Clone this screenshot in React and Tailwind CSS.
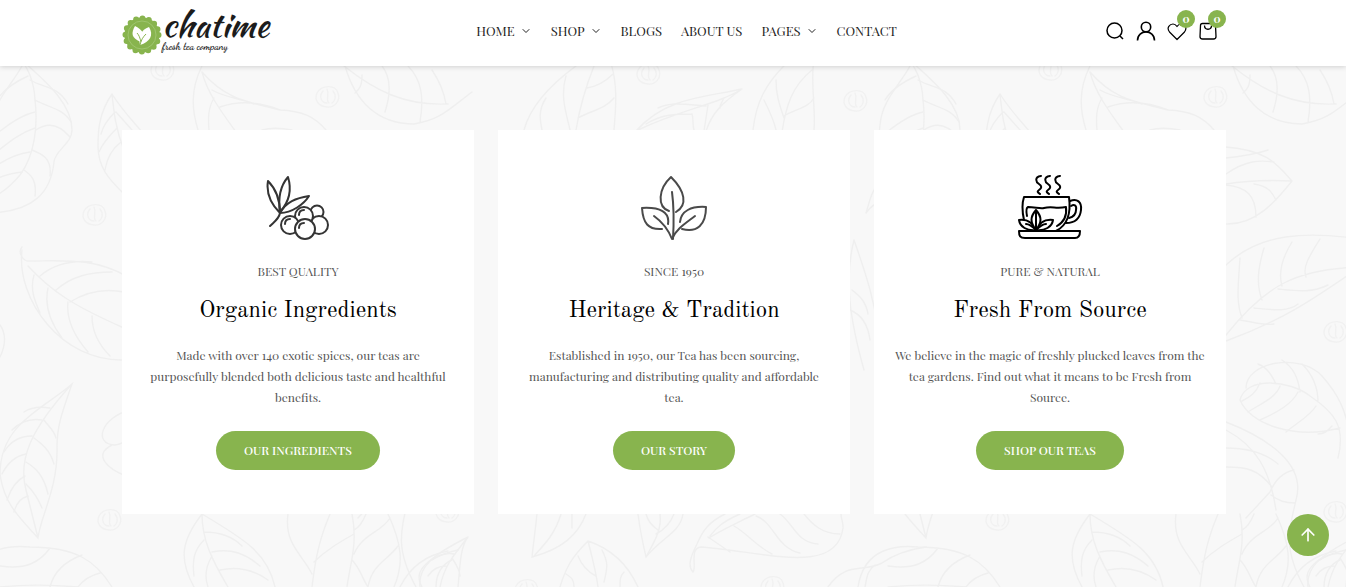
import { ChevronDown, ArrowUp } from "lucide-react";

const menu = [
  { label: "HOME", sub: true },
  { label: "SHOP", sub: true },
  { label: "BLOGS" },
  { label: "ABOUT US" },
  { label: "PAGES", sub: true },
  { label: "CONTACT" },
];

const features = [
  {
    icon: BerriesIcon,
    tag: "BEST QUALITY",
    title: "Organic Ingredients",
    text: "Made with over 140 exotic spices, our teas are purposefully blended both delicious taste and healthful benefits.",
    button: "OUR INGREDIENTS",
  },
  {
    icon: LeavesIcon,
    tag: "SINCE 1950",
    title: "Heritage & Tradition",
    text: "Established in 1950, our Tea has been sourcing, manufacturing and distributing quality and affordable tea.",
    button: "OUR STORY",
  },
  {
    icon: CupIcon,
    tag: "PURE & NATURAL",
    title: "Fresh From Source",
    text: "We believe in the magic of freshly plucked leaves from the tea gardens. Find out what it means to be Fresh from Source.",
    button: "SHOP OUR TEAS",
  },
];

function BerriesIcon() {
  return (
    <svg viewBox="0 0 64 66" className="h-[66px] w-16" fill="none" stroke="#343434" strokeWidth="2" strokeLinecap="round" strokeLinejoin="round">
      <path d="M14 38C5 29 0 18 2 6c7 7 12 16 12 32z" />
      <path d="M14 37C12 23 15 10 22 2c4 13 1 25-8 35z" />
      <path d="M14 38C20 27 30 23 43 21c-5 8-17 17-29 17zM14 38c-1 6-6 9-10 13" />
      <circle cx="51" cy="37" r="6.5" fill="#fff" />
      <circle cx="53" cy="50" r="9" fill="#fff" />
      <circle cx="38" cy="41" r="9" fill="#fff" />
      <circle cx="24" cy="50" r="9" fill="#fff" />
      <circle cx="39" cy="54" r="10" fill="#fff" />
      <path d="M33 40c0-3 2-5 5-5M19 49c0-3 2-5 5-5M33 53c0-3 2-5 5-5" />
    </svg>
  );
}

function LeavesIcon() {
  return (
    <svg viewBox="0 0 66 66" className="size-[66px]" fill="none" stroke="#4a4a4a" strokeWidth="2" strokeLinecap="round" strokeLinejoin="round">
      <path d="M28 36C16 32 17 14 30 2c14 14 17 28 5 35" />
      <path d="M31 17c2 15 2 30 1 47" />
      <path d="M21 54C7 55 2 48 1 33c18-1 28 4 26 16" />
      <path d="M13 41c7 5 14 13 18 23 4-10 14-16 23-23" />
      <path d="M39 47c1-11 11-16 26-15 0 18-9 26-24 22" />
    </svg>
  );
}

function CupIcon() {
  return (
    <svg viewBox="0 0 66 66" className="size-[66px]" fill="none" stroke="#000" strokeWidth="2" strokeLinecap="round" strokeLinejoin="round">
      <path d="M24 1c-7 1-5 6-2 8s3 4 0 6 0 3 1 4M33 1c-7 1-5 6-2 8s3 4 0 6 0 3 1 4M43 1c-7 1-5 6-2 8s3 4 0 6 0 3 1 4" />
      <path d="M7 45C5 36 5 28 7 22h45c2 15-1 28-13 34" />
      <path d="M53 26c7-3 12 1 11 9-1 9-7 13-15 13M54 31c3-2 6-1 5 4 0 4-3 7-7 8" />
      <path d="M10 41c-1-5-1-8 1-9 7 0 12 2 16 1 8-2 12 1 22-1 1 8-2 15-9 19" />
      <path d="M2 56h61c0 5-2 7-5 7H8c-5 0-6-2-6-7z" />
      <path d="M19 55C10 56 3 52 2 45c8-1 14 3 17 10z" fill="#fff" />
      <path d="M19 55c9 1 16-3 17-10-8-1-14 3-17 10z" fill="#fff" />
      <path d="M19 55c-6-8-6-13 0-20 6 7 6 12 0 20z" fill="#fff" />
      <path d="M19 37v18M19 55C15 51 12 49 9 49M19 55c4-4 7-6 10-6" />
    </svg>
  );
}

function Logo() {
  return (
    <a href="#" className="flex items-center text-[#1c1c1c]">
      <svg viewBox="0 0 40 40" className="mt-2 size-10" aria-hidden="true">
        <circle cx="20" cy="20" r="17.5" fill="#88b44e" />
        <circle cx="20" cy="20" r="16.5" fill="none" stroke="#88b44e" strokeWidth="6" strokeLinecap="round" strokeDasharray="0 6.48" />
        <circle cx="20" cy="20" r="14" fill="none" stroke="#a5c977" strokeWidth=".8" />
        <path d="M19 27C9 23 9 18 13 11c8 4 11 9 6 16z" fill="#fff" />
        <path d="M18 30c-2-9 1-15 9-18 5 8 1 15-9 18z" fill="#fff" />
        <path d="M18 30c1-5 3-8 6-11M19 27c-1-4-2-7-4-9" stroke="#88b44e" fill="none" />
      </svg>
      <span className="flex flex-col">
        <span className="font-['Kaushan_Script','Playfair_Display',cursive] text-[34px] leading-8">chatime</span>
        <span className="font-['Dancing_Script','Playfair_Display',cursive] text-[10px] leading-3 font-bold">
          fresh tea company
        </span>
      </span>
    </a>
  );
}

function Bean({ x, y }) {
  return (
    <g transform={`translate(${x} ${y})`} stroke="#f1f1f1">
      <path d="M-11-4C-6-13 8-12 10-4c3 8-4 15-11 14-9-1-13-7-10-14z" />
      <path d="M-5-6c-5 6-1 12 4 12M-1-8c3 5-2 10 2 14M5-6c4 5 2 10-1 12" />
    </g>
  );
}

// One 888px wide strip of the leaf wallpaper
function LeafStrip() {
  return (
    <>
      <path d="M22 60c6 10 12 20 13 40 3 25 0 55-15 75-10 12-20 20-32 24M22 60c15 15 50 40 50 70 0 14-17 20-18 32-3 30-20 50-66 51M22 66C12 85-6 100-8 125c-1 12-3 20-3 30" />
      <path d="M30 80c14 8 28 6 38 24M35 100c14 8 28 8 36 22M36 130c10-7 22-7 34 7M32 150c10 4 20 8 18 26M24 170c7 5 13 10 11 26M28 76C15 82 3 90-3 100M35 112c-14 3-26 12-36 20M35 128c-15 5-26 14-36 22M30 152c-14 2-24 7-34 14M22 172c-10 1-16 3-24 6" />
      <path d="M112 94c-14 20-14 40-14 52 0 22 12 34 24 46M112 94c10 16 20 26 30 38M112 94c2 20 4 36 12 56M115 112c-6 6-12 14-14 22M117 128c-6 6-14 14-18 24M121 142c-8 6-14 16-16 28M116 112l16 18" />
      <path d="M202 66c-12 24-10 44-4 64M202 72c26 30 50 30 78 38 22 1 34 6 46 20M202 72c5 20 18 38 34 60M212 90c14 8 28 8 42 14M220 107c20-7 40-5 60 3M214 98c-6 10-6 20-5 32M262 130c10-3 20-2 30 0" />
      <path d="M344 62c10 40 34 62 70 62 26-4 34-14 58-32M344 66c30 24 60 40 104 38M362 75c0 10-2 14-7 18M382 66c8 10 10 24 3 46M408 66c14 14 16 32 12 56M432 70c8 12 12 22 14 34" />
      <path d="M22 247c-5 6 2 14 6 14 34 0 66-4 100 16M22 250c-6 50 40 112 102 110M28 266c24 26 46 40 96 62M40 276c14-12 30-16 52-14M56 290c16-14 34-18 56-18M70 302c16-10 34-14 54-10M34 275c-4 14 0 24 6 38M48 288c-4 18 2 34 14 50M68 302c-2 18 6 34 20 50M92 316c0 14 6 28 18 40M0 325c6 8 6 20 0 32" />
      <path d="M72 384c-30 26-72 40-72 90 4 30 20 44 38 64 2-20 20-50 19-90 0-20 3-30 15-64zM72 384C30 430 18 460 26 490l12 48" />
      <path d="M50 408c-12-2-20 0-26 4M42 420c-12-2-22 2-30 10M32 436c-12 0-22 6-28 16M26 454c-10 2-18 8-24 20M25 476c-8 4-14 12-18 24M28 496c-8 2-12 8-14 16M44 420c4 6 10 10 12 18M34 438c8 6 16 12 20 26M26 462c10 6 18 14 22 32M26 484c8 8 12 14 16 24" />
      <path d="M-30 587c6-40 40-42 60-40 46 0 66 14 82 40M0 566c26 4 40-4 50-18M50 587c4-16 16-26 32-32M78 587c6-8 14-12 22-14M0 587c30-3 50-2 78 0" />
      <path d="M130 410c-30 8-36 34-16 35 6 0 10-3 16-6M112 445c-20 10-4 24 14 31" />
      <path d="M202 514c-20 26-24 44-8 73M202 514c44 26 66 40 73 73M202 514c0 26 10 46 26 73M204 532c18 0 30 6 38 14M212 552c20-4 34 2 48 14M220 570c18-4 34 0 48 10M204 540c-10 10-12 20-10 36M212 556c-6 10-8 20-4 31" />
      <path d="M330 514c-10 24-14 40-18 73M288 514c-4 30 14 40 24 60M352 514c6 30-2 50-5 73M388 514c14 30 16 50 6 73M366 514c-4 10-8 14-12 16M390 518c-8 14-28 16-36 36M398 546c-10 14-26 18-30 41M314 562c12-12 26-20 40-28M352 560c8 8 10 18 16 27" />
      <path d="M458 550c-36 8-44 24-36 37M452 560c-10 4-16 14-16 27" />
      <path d="M338 147c40 3 50 16 66 34-16 20-36 44-66 43M338 184c24-4 44-4 66-3M338 158c20-2 30-4 42-8M338 174c20-14 34-14 48-12M338 185c20 2 30 10 30 32M366 184c14 2 18 8 22 16" />
      <path d="M338 265c34-32 80-34 134-26M338 335c40-50 70-66 134-68M338 341c60-22 90-44 134-74M354 318c-6-16-4-30-2-60M374 300c-6-16-4-32 2-52M394 286c-4-14 0-28 10-44M418 277c-4-10 4-22 14-38M366 308c20 2 34 4 44-4M390 289c20 2 34 4 50-4M352 320c14 2 24 6 34 4" />
      <path d="M358 388c0-26 54-36 76-12 16 18 24 34 28 60M352 400c6-24 50-20 70-4 24 16 36 30 28 62M352 400c10 24 54 40 100 28M372 383c-4 10-10 14-18 18M392 386c-4 12-20 18-32 26M410 392c-6 12-20 20-38 28M428 406c-6 10-18 16-30 26M444 426c-4 4-6 8-14 8M370 364c10 4 14 12 18 20M394 360c12 8 16 18 18 32M414 364c12 12 16 24 16 38" />
      <path d="M338 422c46 18 80 44 70 78-8 34-12 50 8 87M338 430c30 16 44 40 50 80M338 448c20 0 38 4 52 16M338 467c20 0 32 2 46 20M382 492c6-14 14-20 24-22M382 492l-24 26M383 495c8 6 14 8 24 8M400 587c10-20 26-32 48-36" />
      <path d="M576 66c-30 22-46 42-52 64M610 60c8 24 6 46 4 70M594 66c-8 20-14 40-18 64M566 76c-6 20 0 36 4 54M546 98c-8 12-6 22-4 32M587 88c12-2 20-8 26-14M578 118c14-8 26-8 36-20" />
      <path d="M742 89c-36 8-76 8-106 42M742 89c-20 14-30 24-36 42M742 89c-26 16-60 20-104 41M724 98c-2 4-4 6-4 10M708 105l-4 26M692 114c2 6 0 10 2 16M706 106c-24-2-36-4-48 2M692 114c-16 0-30 0-46 10" />
      <path d="M790 60c-26 24-34 44-37 70M814 60c-4 20 2 50 0 70M812 70c-20 16-26 36-30 62M776 80c0 16 4 26 8 38M764 100c6 12 10 20 12 30M784 116c14-8 24-8 30-18" />
      <path d="M866 213c8-12 18-12 20-14M866 213c4-12 4-18 10-26M854 240c-10 40-4 80 10 130M854 240c14 40 20 60 24 90M852 290c8 6 14 12 16 24M850 310c10 4 18 14 20 30" />
      <path d="M468 537c-36 18-50 30-48 50M468 537c-8 10-8 30-10 50M468 537c-16 20-24 30-28 50M454 554c-8-2-16 2-22 6M446 566c-8 0-14 4-18 10M452 558c4 6 8 12 8 18" />
      <path d="M537 514l-5 43c30-8 46-22 54-43M561 514c-6 20-16 30-28 43M572 514v14" />
      <path d="M588 541c-16 16-22 26-28 46M588 541c24 8 40 24 50 46M588 541c4 16 8 30 10 46M578 556c4 10 10 16 18 20M566 574c6 4 8 6 8 13M602 550c6 12 6 16 2 32M624 572c-4 4-4 8-4 15" />
      <path d="M638 514c2 16 4 26 8 43 16-20 34-24 37-43M660 514c2 16-6 28-14 43M646 514c2 8 6 12 12 16M674 514c-4 10-10 16-18 20" />
      <path d="M725 514c-16 8-22 16-28 30-6 12-10 22-4 28 4-4-4-24 8-25 60 4 136 30 142-19M755 514c-20 10-34 16-46 24M740 514c-18 8-24 14-30 22M708 537l22 15M734 526c14 8 22 20 38 28M756 516c18 6 20 32 44 37M780 514c14 10 16 28 38 30M804 514c8 10 18 20 36 20M843 527c0-6-2-8-2-13" />
      <path d="M828 587c18-26 34-14 54-24 14-10 30-14 44-16M875 565c-8 6-8 12-10 22" />
      <Bean x={95} y={215} />
      <Bean x={163} y={70} />
      <Bean x={328} y={97} />
      <Bean x={649} y={74} />
      <Bean x={856} y={101} />
      <Bean x={110} y={520} />
      <Bean x={448} y={512} />
      <Bean x={448} y={332} />
      <Bean x={527} y={590} />
      <Bean x={773} y={587} />
    </>
  );
}

function Wallpaper() {
  return (
    <svg viewBox="0 66 1346 521" preserveAspectRatio="xMidYMin slice" className="absolute inset-0 h-full w-full" fill="none" stroke="#efefef" strokeWidth="1.4" strokeLinecap="round" aria-hidden="true">
      <LeafStrip />
      <g transform="translate(888 0)">
        <LeafStrip />
      </g>
    </svg>
  );
}

function Badge() {
  return (
    <span className="absolute -top-2.5 -right-2 flex size-[18px] items-center justify-center rounded-full bg-[#88b44e] text-[11px] leading-4 font-bold text-white">
      0
    </span>
  );
}

function HeaderIcons() {
  return (
    <div className="mr-2 flex items-center gap-2.5 text-black">
      <button aria-label="Search">
        <svg viewBox="0 0 21 22" className="h-[22px] w-[21px]" fill="none" stroke="currentColor" strokeWidth="1.5">
          <circle cx="10.5" cy="10.5" r="7.5" />
          <path d="M16 16l3 3" />
        </svg>
      </button>
      <button aria-label="Account">
        <svg viewBox="0 0 21 22" className="h-[22px] w-[21px]" fill="none" stroke="currentColor" strokeWidth="1.6">
          <circle cx="11" cy="7" r="4.7" />
          <path d="M2.5 20.5c0-11.5 17-11.5 17 0" />
        </svg>
      </button>
      <button aria-label="Wishlist" className="relative">
        <svg viewBox="0 0 21 22" className="h-[22px] w-[21px]" fill="none" stroke="currentColor" strokeWidth="1.2" strokeLinejoin="round">
          <path d="M11 19.500L3.500 12C0 7.500 4 4 7 4c2 0 3 1 4 2.500C12 5 13 4 15 4c3 0 7 3.500 3.500 8z" />
        </svg>
        <Badge />
      </button>
      <button aria-label="Cart" className="relative">
        <svg viewBox="0 0 21 22" className="h-[22px] w-[21px]" fill="none" stroke="currentColor" strokeWidth="1.3">
          <path d="M5.500 3.500h11q2 0 2 2l.500 11q0 2.500-2.500 2.500H5.500Q3 19 3 16.500l.500-11q0-2 2-2z" />
          <path d="M7.500 5.500c0 5 7 5 7 0" />
        </svg>
        <Badge />
      </button>
    </div>
  );
}

function Header() {
  return (
    <header className="relative z-10 bg-white shadow-[0_1px_5px_rgba(0,0,0,0.16)]">
      <div className="mx-auto flex h-[66px] max-w-[1106px] items-center justify-between pb-1 pl-0.5">
        <Logo />
        <nav className="flex items-center gap-[19px]">
          {menu.map((item) => (
            <a key={item.label} href="#" className="flex items-center gap-[5px] text-[13px] leading-5 text-[#222]">
              {item.label}
              {item.sub && <ChevronDown className="size-3" strokeWidth={2} />}
            </a>
          ))}
        </nav>
        <HeaderIcons />
      </div>
    </header>
  );
}

function FeatureCard({ feature }) {
  const Icon = feature.icon;
  return (
    <article className="flex flex-col items-center bg-white px-5 pt-[45px] pb-11 text-center">
      <Icon />
      <p className="mt-5 text-[12px] leading-5 text-[#555]">{feature.tag}</p>
      <h2 className="mt-[14px] font-['Old_Standard_TT','Playfair_Display','Liberation_Serif',serif] text-[23px] leading-8 text-black">
        {feature.title}
      </h2>
      <p className="mt-[18px] text-[12px] leading-[21px] text-[#555]">{feature.text}</p>
      <a href="#" className="mt-[23px] rounded-full bg-[#88b44e] px-7 text-[12px] leading-[39px] font-medium text-white">
        {feature.button}
      </a>
    </article>
  );
}

export default function App() {
  return (
    <div className="flex min-h-screen flex-col bg-[#f8f8f8] font-['Playfair_Display','Liberation_Serif',serif]">
      <Header />
      <main className="relative flex-1">
        <Wallpaper />
        <section className="relative mx-auto grid max-w-[1106px] grid-cols-3 gap-6 py-16 pl-0.5">
          {features.map((feature) => (
            <FeatureCard key={feature.title} feature={feature} />
          ))}
        </section>
      </main>
      <button aria-label="Back to top" className="fixed right-[17px] bottom-[31px] z-20 flex size-[42px] items-center justify-center rounded-full bg-[#88b44e] text-white">
        <ArrowUp className="size-5" strokeWidth={2} />
      </button>
    </div>
  );
}
